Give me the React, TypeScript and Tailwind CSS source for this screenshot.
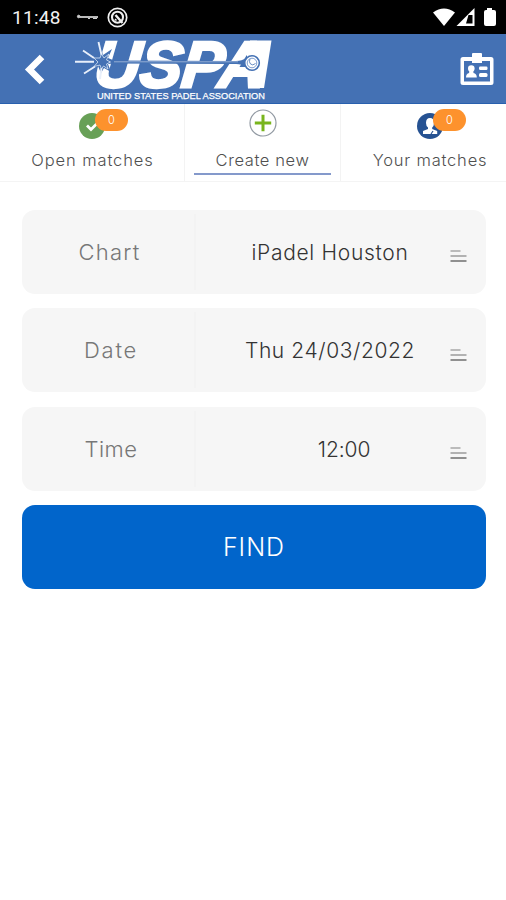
import React from "react";

function StatusBar() {
  return (
    <div className="flex h-[34px] items-center justify-between bg-black pl-[12px] pr-[9px] text-white">
      <div className="flex items-center">
        <span className="w-[50px] whitespace-nowrap font-['Roboto',sans-serif] text-[19px] leading-none tracking-[0.3px] text-[#f2f2f2]">11:48</span>
        <svg className="ml-[14px]" width="22" height="8" viewBox="0 0 22 8" fill="none" stroke="#cfcfcf">
          <circle cx="2.7" cy="3.5" r="1.3" fill="#cfcfcf" />
          <path d="M4 4h18" strokeWidth="1.8" />
          <path d="M12 5.500h2M17 5.500h4" strokeWidth="1" />
        </svg>
        <svg className="ml-[9px]" width="21" height="21" viewBox="0 0 21 21" fill="none" stroke="#f0f0f0">
          <circle cx="10.5" cy="10.5" r="9.2" strokeWidth="1.7" />
          <circle cx="10.5" cy="10.2" r="5.5" strokeWidth="2.1" />
          <path d="M8.500 8l7 8" strokeWidth="2.400" />
          <path d="M8 12l1.5 1.5" strokeWidth="1.5" />
        </svg>
      </div>
      <svg width="64" height="20" viewBox="0 0 64 20" fill="#fff">
        <path d="M0 5.5Q11 -2.5 22 5.5L11 19Z" />
        <path fillRule="evenodd" d="M41.5 1v18H23.5ZM39.5 8H35.5L33 16.5H39.5Z" />
        <path d="M54 1h5v2h2q2 0 2 2v12q0 2-2 2h-8q-2 0-2-2V5q0-2 2-2h1Z" />
      </svg>
    </div>
  );
}

function Logo() {
  return (
    <svg className="ml-[28px]" width="200" height="70" viewBox="74 34 200 70">
      <g transform="translate(93 86.500) skewX(-6)">
        <text x="0" y="0" textLength="170" lengthAdjust="spacingAndGlyphs" fill="#fff" stroke="#fff" strokeWidth="3" fontFamily="'Liberation Sans', Arial, sans-serif" fontWeight="700" fontStyle="italic" fontSize="65">USPA</text>
      </g>
      <path d="M250 40.500h21.500l-7.500 47.500h-14Z" fill="#fff" />
      <path d="M108 60.500L236 61q6 0 10-3v9q-4-3-10-3L108 63.500Z" fill="#4471b4" />
      <path d="M108 61.800H238" stroke="#e6edf7" strokeWidth="0.500" />
      <circle cx="252" cy="63" r="7.300" fill="#fff" stroke="#4471b4" strokeWidth="1.600" />
      <circle cx="252" cy="63" r="4.800" fill="none" stroke="#6f92c8" strokeWidth="0.900" />
      <path d="M250 59q-1.500 3 .5 5t5-.5" fill="none" stroke="#4471b4" strokeWidth="0.800" />
      <path d="M101 48l2 7 9-6-4 9 6 2.500v2.500l-6 1 3 8-7-4-3 5-3-7-6 0 4-4-4-4 6 0Z" fill="#4471b4" />
      <path d="M75 61.800H94M83 50.500l11 7.500M98.500 42l3 13M84 73.500l11-7M100 79l1.500-11" fill="none" stroke="#e8effa" strokeWidth="1.900" />
      <path d="M94 58l6 0 1.500-4 2.500 4 5-4-2.500 6 4 2-4 2 1.500 5-4.500-3-2 3-1.500-4-6 1.500 4-4.500Z" fill="none" stroke="#d8e4f5" strokeWidth="0.800" />
      <text x="97" y="98.500" textLength="168" lengthAdjust="spacingAndGlyphs" fill="#fff" stroke="#fff" strokeWidth="0.250" fontFamily="'Liberation Sans', Arial, sans-serif" fontSize="9.600">UNITED STATES PADEL ASSOCIATION</text>
    </svg>
  );
}

function Header() {
  return (
    <header className="flex h-[70px] items-center border-b border-[#2860ae] bg-[#4471b4]">
      <svg className="ml-[24px]" width="22" height="32" viewBox="0 0 22 32" fill="none" stroke="#fff" strokeWidth="6.500">
        <path d="M18 4L5.500 16.500L18 29" />
      </svg>
      <Logo />
      <svg className="ml-auto mr-[11px]" width="36" height="36" viewBox="0 0 36 36" fill="#fff">
        <path fillRule="evenodd" d="M4 6H13V3q0-1 1-1h8q1 0 1 1v3h9q2.500 0 2.500 2.500v23Q34.500 34 32 34H4Q1.500 34 1.500 31.500v-23Q1.500 6 4 6ZM5 10V30.500H31V10H23v2H13v-2Z" />
        <circle cx="12.300" cy="17.500" r="3.300" />
        <path d="M10.500 18h3.600l.4 4q3.300.8 3.300 4.500H7q0-3.700 3.100-4.500Z" />
        <rect x="20" y="15.500" width="8.500" height="3.500" rx="1.200" />
        <rect x="20" y="22" width="8.500" height="4" rx="1.500" />
      </svg>
    </header>
  );
}

function Badge() {
  return (
    <span className="absolute left-[16px] top-[-4px] flex h-[22px] w-[33px] items-center justify-center rounded-full bg-[#fd922d] font-['Inter',sans-serif] text-[11px] font-light text-white">0</span>
  );
}

function Tabs() {
  return (
    <nav className="flex h-[78px] border-b border-[#f4f4f4] bg-white font-['Inter',sans-serif] text-[16.500px] font-light text-[#505050]">
      <div className="flex w-[185px] flex-col items-center border-r border-[#f3f3f3] pt-[9px]">
        <div className="relative h-[26px] w-[26px]">
          <svg width="26" height="26" viewBox="0 0 26 26">
            <circle cx="13" cy="13" r="13" fill="#68a057" />
            <path d="M8 12.500l4 4 6-6" fill="none" stroke="#fff" strokeWidth="2.800" />
          </svg>
          <Badge />
        </div>
        <span className="mt-[9px] whitespace-nowrap pl-px leading-[24px] tracking-[0.900px]">Open matches</span>
      </div>
      <div className="flex w-[156px] flex-col items-center border-r border-[#f3f3f3] pt-[5px]">
        <svg width="28" height="28" viewBox="0 0 28 28" fill="none">
          <circle cx="14" cy="14" r="13" stroke="#929aa3" strokeWidth="1.200" />
          <path d="M14 5.800v16.400M5.800 14h16.400" stroke="#79b51d" strokeWidth="3" />
        </svg>
        <span className="mt-[11px] whitespace-nowrap leading-[24px] tracking-[0.600px]">Create new</span>
        <div className="mt-px h-[2px] w-[137px] bg-[#8499cb]" />
      </div>
      <div className="flex flex-1 flex-col items-center pl-[13px] pt-[9px]">
        <div className="relative h-[26px] w-[26px]">
          <svg width="26" height="26" viewBox="0 0 26 26">
            <circle cx="13" cy="13" r="13" fill="#265292" />
            <path d="M13 5q4 0 4 5 0 3-1.800 4.500v1.500l5 2v3H6v-3l5-2v-1.500Q9 13 9 10q0-5 4-5Z" fill="#fff" />
            <path d="M14 21l2-3" stroke="#265292" strokeWidth="1.200" />
          </svg>
          <Badge />
        </div>
        <span className="mt-[9px] whitespace-nowrap leading-[24px] tracking-[0.800px]">Your matches</span>
      </div>
    </nav>
  );
}

function Field({ label, value, labelClass, valueClass }: { label: string; value: string; labelClass: string; valueClass: string }) {
  return (
    <div className="flex h-[84px] items-center rounded-[13px] bg-[#f6f6f6] font-['Inter',sans-serif] font-light">
      <div className={`flex h-[76px] w-[174px] items-center justify-center border-r-2 border-[#f3f3f3] pt-px text-[22px] text-[#777] ${labelClass}`}>
        <span>{label}</span>
      </div>
      <div className="flex flex-1 items-center pr-[19px]">
        <div className={`flex-1 whitespace-nowrap pt-[2px] text-center text-[21px] text-[#333] ${valueClass}`}>{value}</div>
        <svg className="mt-[9px]" width="17" height="14" viewBox="0 0 17 14">
          <path d="M0.500 2h10" stroke="#bbb" strokeWidth="2" />
          <path d="M0.500 7h16" stroke="#b2b2b2" strokeWidth="2" />
          <path d="M0.500 12h16" stroke="#909090" strokeWidth="2" />
        </svg>
      </div>
    </div>
  );
}

export default function App() {
  return (
    <div className="min-h-[900px] w-[506px] bg-white">
      <StatusBar />
      <Header />
      <Tabs />
      <main className="flex flex-col gap-[14.500px] pl-[22px] pr-[20px] pt-[27.500px]">
        <Field label="Chart" value="iPadel Houston" labelClass="pl-[3px] tracking-[1.200px]" valueClass="pl-[14px] tracking-[0.700px]" />
        <Field label="Date" value="Thu 24/03/2022" labelClass="pl-[6px] tracking-[1.700px]" valueClass="pl-[14px] tracking-[0.600px]" />
        <Field label="Time" value="12:00" labelClass="pl-[6px] tracking-[0.500px]" valueClass="pl-[42px] tracking-[-0.100px]" />
        <button className="flex h-[84px] items-center justify-center rounded-[13px] bg-[#0165cb] pt-[2px] font-['Inter',sans-serif] text-[25px] font-light tracking-[1px] text-white">FIND</button>
      </main>
    </div>
  );
}
